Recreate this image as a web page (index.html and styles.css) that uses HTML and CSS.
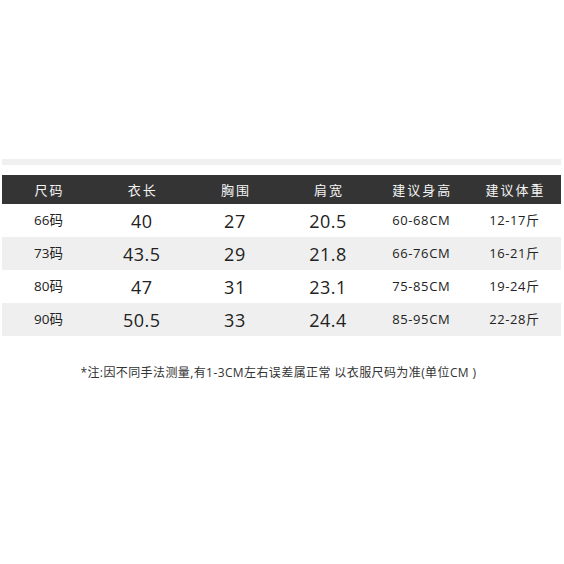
FILE: index.html
```html
<!DOCTYPE html>
<html lang="zh">
<head>
<meta charset="utf-8">
<link rel="stylesheet" href="styles.css">
</head>
<body>
<div class="page">
  <div class="band"></div>
  <div class="table">
    <div class="row head">
      <div class="cell">尺码</div><div class="cell">衣长</div><div class="cell">胸围</div><div class="cell">肩宽</div><div class="cell">建议身高</div><div class="cell">建议体重</div>
    </div>
    <div class="row">
      <div class="cell size">66码</div><div class="cell num">40</div><div class="cell num">27</div><div class="cell num">20.5</div><div class="cell small">60-68CM</div><div class="cell small">12-17斤</div>
    </div>
    <div class="row alt">
      <div class="cell size">73码</div><div class="cell num">43.5</div><div class="cell num">29</div><div class="cell num">21.8</div><div class="cell small">66-76CM</div><div class="cell small">16-21斤</div>
    </div>
    <div class="row">
      <div class="cell size">80码</div><div class="cell num">47</div><div class="cell num">31</div><div class="cell num">23.1</div><div class="cell small">75-85CM</div><div class="cell small">19-24斤</div>
    </div>
    <div class="row alt">
      <div class="cell size">90码</div><div class="cell num">50.5</div><div class="cell num">33</div><div class="cell num">24.4</div><div class="cell small">85-95CM</div><div class="cell small">22-28斤</div>
    </div>
  </div>
  <p class="note">*注:因不同手法测量,有1-3CM左右误差属正常 以衣服尺码为准(单位CM )</p>
</div>
</body>
</html>
```
FILE: styles.css
```css
html, body {
  margin: 0;
  padding: 0;
  background: #ffffff;
}
.page {
  width: 564px;
  height: 564px;
  padding-top: 159px;
  box-sizing: border-box;
  font-family: "Open Sans", "Noto Sans CJK SC", sans-serif;
  color: #222;
}
.band {
  margin: 0 3px 0 2px;
  height: 6px;
  background: #f0f0f0;
}
.table {
  margin: 10px 3px 0 2px;
  display: flex;
  flex-direction: column;
}
.row {
  display: grid;
  grid-template-columns: repeat(6, 1fr);
  height: 33px;
  align-items: center;
}
.row.head {
  height: 29px;
  background: #343434;
  color: #f4f4f4;
}
.row.alt {
  background: #efefef;
}
.cell {
  text-align: center;
  line-height: 1;
}
.head .cell {
  font-family: "Noto Sans CJK SC", sans-serif;
  font-size: 13px;
  letter-spacing: 2px;
  padding-left: 2px;
}
.size {
  font-size: 13.5px;
  color: #222;
}
.num {
  font-size: 18px;
  letter-spacing: 0.5px;
  color: #222;
}
.small {
  font-size: 13px;
  letter-spacing: 0.6px;
  color: #222;
}
.note {
  margin: 29px 0 0 0;
  text-align: center;
  font-size: 12px;
  line-height: 16px;
  color: #333;
  padding-right: 7px;
  letter-spacing: 0.4px;
}
```
